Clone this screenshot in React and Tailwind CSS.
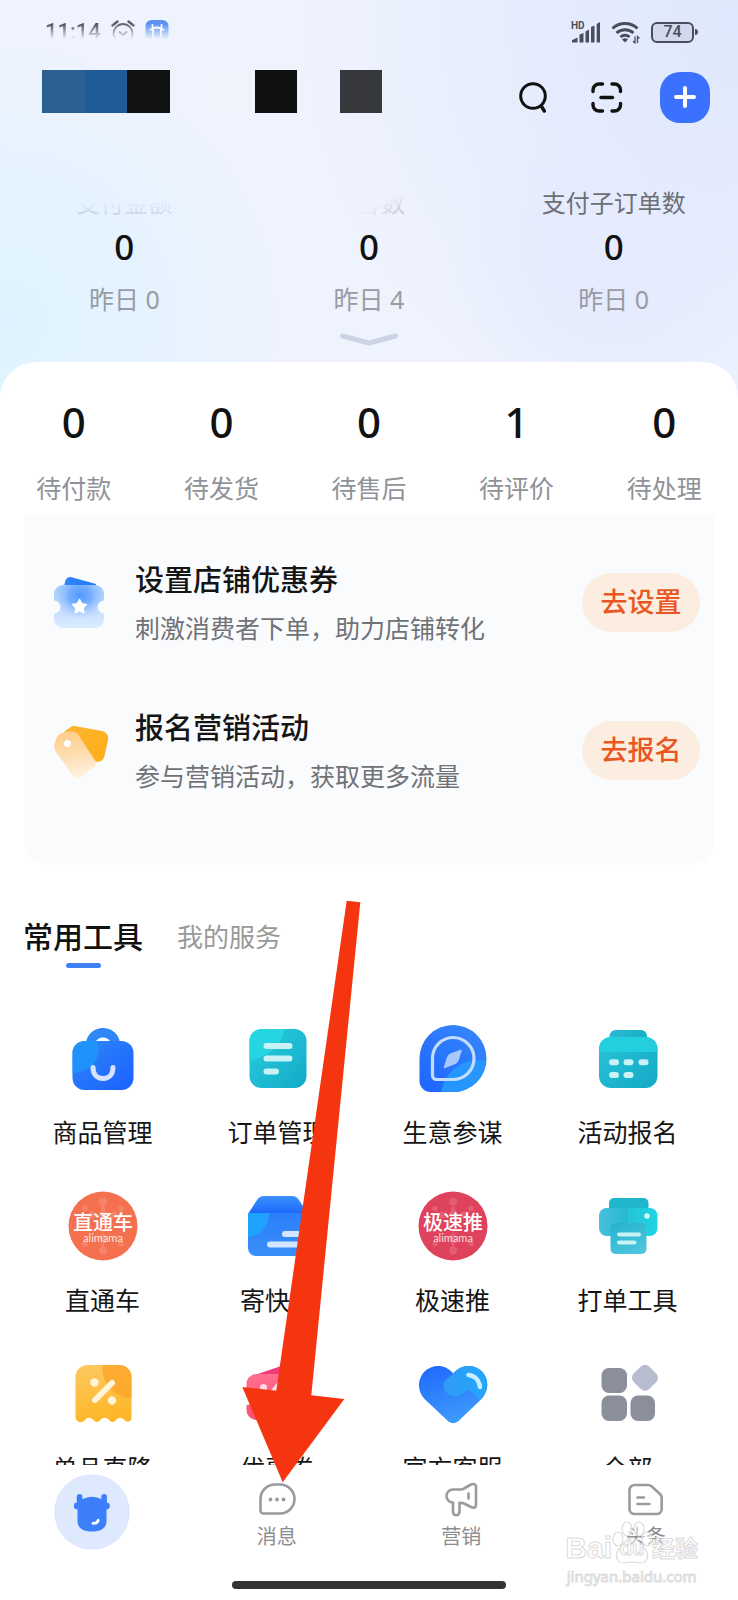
import React from "react";

const FONT = "font-['Noto_Sans','Noto_Sans_CJK_SC',sans-serif]";

/* ---------- status bar ---------- */

function AlarmIcon() {
  return (
    <svg viewBox="0 0 24 24" className="h-6 w-6" fill="none" stroke="#4a4f5c" strokeLinecap="round">
      <circle cx="12" cy="13.500" r="9.500" strokeWidth="1.800" />
      <path d="M1.500 5.500 6.500 1.500M22.500 5.500l-5-4" strokeWidth="2.400" />
      <path d="m8.500 12 3.500 3 3.500-3" strokeWidth="1.800" />
    </svg>
  );
}

function AppBadge() {
  return (
    <svg viewBox="0 0 24 24" className="h-6 w-6">
      <rect x="0.500" y="0" width="23" height="24" rx="6" fill="#4b86ee" />
      <path
        d="M7.500 5V7.500M16.500 5V7.500M8 8.500q4-2 8 0v7.500a3 3 0 0 1-3 3h-2a3 3 0 0 1-3-3zM5.500 9.500H8M16 9.500h2.500"
        fill="none"
        stroke="#fff"
        strokeWidth="1.800"
        strokeLinecap="round"
      />
    </svg>
  );
}

function SignalIcon() {
  return (
    <svg viewBox="0 0 30 22" className="h-[22px] w-[30px]" fill="#4a4e5c">
      <text x="0" y="8" fontSize="10" fontWeight="700" fontFamily="Roboto, sans-serif">HD</text>
      <path d="M1 21.500v-2.200l5.500-2.800v5zM8.500 21.500v-8l4-1.500v9.500zM14.500 21.500v-11l3.500-2v13zM20 21.500V6l3.500-1.500v17zM25.700 21.500V3L29 1v20.500z" />
    </svg>
  );
}

function WifiIcon() {
  return (
    <svg viewBox="0 0 30 24" className="h-6 w-[30px]" fill="none" stroke="#4a4e5c" strokeWidth="3">
      <path d="M1.500 8.500a18 18 0 0 1 25 0" />
      <path d="M5.500 13a12.500 12.500 0 0 1 17 0" />
      <path d="M9.500 17a6.500 6.500 0 0 1 9 0" />
      <path d="m11 19.500 3 3 3-3a4.500 4.500 0 0 0-6 0z" fill="#4a4e5c" stroke="none" />
      <path d="M24 16.500V23l-2-2M26.500 23v-6.500l2 2" strokeWidth="1.300" />
    </svg>
  );
}

function StatusBar() {
  return (
    <div className="flex h-16 items-center justify-between pl-[45px] pr-10">
      <div className="flex items-center gap-2.5 [mask-image:linear-gradient(to_bottom,rgba(0,0,0,0.9)_15%,transparent_80%)]">
        <span className="font-['Roboto',sans-serif] text-[22px] font-medium leading-6 text-[#3a3e49]">11:14</span>
        <AlarmIcon />
        <AppBadge />
      </div>
      <div className="flex items-center gap-2.5">
        <SignalIcon />
        <WifiIcon />
        <div className="flex items-center">
          <div className="flex h-[21px] w-[43px] items-center justify-center rounded-md border-2 border-[#4a4e5c] bg-[#d3d9ec] font-['Roboto',sans-serif] text-[16px] font-medium leading-none text-[#4a4e5c]">
            74
          </div>
          <div className="ml-px h-1.5 w-[3px] rounded-r-sm bg-[#4a4e5c]" />
        </div>
      </div>
    </div>
  );
}

/* ---------- header ---------- */

function TopBar() {
  return (
    <div className="flex h-[66px] items-center justify-between pl-[42px] pr-7">
      <div className="flex self-start pt-1.5">
        <div className="h-[43px] w-[43px] bg-[#2c6093]" />
        <div className="h-[43px] w-[42px] bg-[#1f5c97]" />
        <div className="h-[43px] w-[43px] bg-[#111212]" />
        <div className="ml-[42px] h-[43px] w-[43px] bg-[#f0f3fa]" />
        <div className="h-[43px] w-[42px] bg-[#0f1113]" />
        <div className="ml-[43px] h-[43px] w-[42px] bg-[#37383c]" />
      </div>
      <div className="flex items-center">
        <button type="button" aria-label="搜索" className="mr-[43px]">
          <svg viewBox="0 0 30 32" className="h-8 w-[30px]" fill="none" stroke="#111" strokeWidth="3" strokeLinecap="round">
            <circle cx="15" cy="15" r="12.300" />
            <path d="m23.500 25.500 2.800 4.500" strokeWidth="3.400" />
          </svg>
        </button>
        <button type="button" aria-label="扫一扫" className="mr-[37px]">
          <svg viewBox="0 0 32 32" className="h-8 w-8" fill="none" stroke="#111" strokeWidth="3.400" strokeLinecap="round">
            <path d="M2 10.500V9a6 6 0 0 1 6-6H11.500M21 3h2.500a6 6 0 0 1 6 6V10.500M29.500 22.500V24a6 6 0 0 1-6 6H21M11.500 30H8a6 6 0 0 1-6-6V22.500" />
            <path d="M10 16.500h11.500" />
          </svg>
        </button>
        <button type="button" aria-label="添加" className="flex h-[51px] w-[50px] items-center justify-center rounded-[20px] bg-[#3c70fe]">
          <svg viewBox="0 0 24 24" className="h-6 w-6" fill="none" stroke="#fff" strokeWidth="4" strokeLinecap="round">
            <path d="M12 3v18M3 12h18" />
          </svg>
        </button>
      </div>
    </div>
  );
}

function Stat({ label, value, past, labelClass }) {
  return (
    <div className="flex flex-col items-center">
      <div className={`text-[24px] leading-8 text-[#6c6f76] ${labelClass}`}>{label}</div>
      <div className="mt-1 text-[35px] font-medium leading-[48px] text-[#111]">{value}</div>
      <div className="mt-3 text-[25px] leading-8 text-[#999ca3]">昨日 {past}</div>
    </div>
  );
}

function Header() {
  return (
    <header className="bg-[#eff3fe] bg-[radial-gradient(circle_at_0%_80%,#def3ff_0,#e4f3ff_16%,transparent_36%),radial-gradient(circle_at_82%_68%,#e5eafd_0,transparent_24%),radial-gradient(circle_at_100%_5%,#dfe8fc_0,#e4ebfd_20%,transparent_52%)] pb-14">
      <StatusBar />
      <TopBar />
      <div className="mt-[57px] grid grid-cols-3 px-0.5">
        <Stat
          label="支付金额"
          value="0"
          past="0"
          labelClass="[mask-image:linear-gradient(to_bottom,transparent_45%,rgba(0,0,0,0.22)_85%)]"
        />
        <Stat
          label="访客数"
          value="0"
          past="4"
          labelClass="[mask-image:linear-gradient(155deg,transparent_58%,rgba(0,0,0,0.35)_90%)]"
        />
        <Stat label="支付子订单数" value="0" past="0" labelClass="" />
      </div>
      <div className="mt-[18px] flex justify-center">
        <svg viewBox="0 0 60 13" className="h-[13px] w-[60px]" fill="none" stroke="#cad4e4" strokeWidth="5" strokeLinecap="round" strokeLinejoin="round">
          <path d="M3.500 3 30 10l26.500-7" />
        </svg>
      </div>
    </header>
  );
}

/* ---------- orders + tasks ---------- */

const ORDERS = [
  ["0", "待付款"],
  ["0", "待发货"],
  ["0", "待售后"],
  ["1", "待评价"],
  ["0", "待处理"],
];

function CouponArt() {
  const body =
    "M13 13h32a9 9 0 0 1 9 9v6.500a6.500 6.500 0 0 0 0 13V47a9 9 0 0 1-9 9H13a9 9 0 0 1-9-9v-5.500a6.500 6.500 0 0 0 0-13V22a9 9 0 0 1 9-9z";
  return (
    <svg viewBox="0 0 60 60" className="h-[60px] w-[60px] shrink-0">
      <defs>
        <linearGradient id="cpBack" x1="0" y1="0" x2="1" y2="0">
          <stop offset="0" stopColor="#2f86fb" />
          <stop offset="1" stopColor="#2376f5" />
        </linearGradient>
        <linearGradient id="cpBody" x1="0" y1="0" x2="0" y2="1">
          <stop offset="0" stopColor="#a5cbff" />
          <stop offset="1" stopColor="#dcebff" />
        </linearGradient>
        <radialGradient id="cpGlow" cx="0.520" cy="0.250" r="0.550">
          <stop offset="0" stopColor="#4f98fd" />
          <stop offset="0.400" stopColor="#63a4fe" stopOpacity="0.800" />
          <stop offset="1" stopColor="#a5cbff" stopOpacity="0" />
        </radialGradient>
      </defs>
      <path d="M13.500 16 15.500 8.500Q17.500 4.500 21.500 5.200L46 12v4z" fill="url(#cpBack)" />
      <path d={body} fill="url(#cpBody)" />
      <path d={body} fill="url(#cpGlow)" />
      <path d="m29.500 27.500 2.200 4.300 4.800.7-3.500 3.400.8 4.800-4.300-2.200-4.300 2.200.8-4.800-3.500-3.400 4.800-.7z" fill="#fff" stroke="#fff" strokeWidth="1.600" strokeLinejoin="round" />
    </svg>
  );
}

function TagArt() {
  return (
    <svg viewBox="0 0 60 60" className="h-[60px] w-[60px] shrink-0">
      <defs>
        <linearGradient id="tgBack" x1="0" y1="0" x2="1" y2="1">
          <stop offset="0" stopColor="#fcb42e" />
          <stop offset="1" stopColor="#ffae1b" />
        </linearGradient>
        <linearGradient id="tgFront" x1="0.500" y1="0" x2="0.600" y2="1">
          <stop offset="0" stopColor="#fdcf8c" />
          <stop offset="0.450" stopColor="#fedcae" />
          <stop offset="1" stopColor="#fff3e4" />
        </linearGradient>
      </defs>
      <path d="M14 12 20 7.500Q23 5.500 26 6.200L52 11q7 2 6 9l-3.500 16q-2 7-9 5.500L40 39z" fill="url(#tgBack)" />
      <path d="M13 12.500 21 11.300q5-.300 7.500 3.700L45 40.500q2.500 5-2 7.500L31 57.500q-5 3-8.500-2L6 32q-2.500-4-1.500-8l2-6q2-4.500 6.500-5.500z" fill="url(#tgFront)" />
      <circle cx="17.500" cy="23.500" r="3.500" fill="#fff" />
    </svg>
  );
}

function Task({ art, title, desc, action }) {
  return (
    <div className="flex h-[148px] items-center pl-[26px] pr-3.5">
      {art}
      <div className="ml-[25px] flex-1 whitespace-nowrap">
        <h3 className="text-[29px] font-medium leading-[44px] text-[#151515]">{title}</h3>
        <p className="mt-2 text-[25px] leading-9 text-[#707276]">{desc}</p>
      </div>
      <button type="button" className="h-[59px] w-[118px] rounded-full bg-[#fbeee0] pb-0.5 text-[27px] font-medium leading-none text-[#ea5722]">
        {action}
      </button>
    </div>
  );
}

/* ---------- tools ---------- */

function Art({ children }) {
  return (
    <svg viewBox="0 0 72 72" className="h-[72px] w-[72px]" fill="none">
      {children}
    </svg>
  );
}

function BagArt() {
  return (
    <Art>
      <defs>
        <linearGradient id="bagG" x1="0" y1="0" x2="1" y2="1">
          <stop offset="0" stopColor="#3088f8" />
          <stop offset="1" stopColor="#1a60ff" />
        </linearGradient>
        <clipPath id="bagC"><rect x="5.500" y="19" width="61" height="49" rx="12" /></clipPath>
      </defs>
      <path d="M19 20C21 11 28 6 36 6s15 5 17 14H43.500c-1.500-3-4-4.500-7.500-4.500s-6 1.500-7.500 4.500z" fill="#2f86f7" />
      <rect x="5.500" y="19" width="61" height="49" rx="12" fill="url(#bagG)" />
      <path d="M0 15h27c4 3 4.500 9 4.500 14C31 42 20 51 0 52z" fill="#1f97fc" fillOpacity="0.850" clipPath="url(#bagC)" />
      <path d="M26 45.500c0 7 4 11 10 11s10-4 10-11" stroke="#d4e3ff" strokeWidth="5" strokeLinecap="round" />
    </Art>
  );
}

function OrderArt() {
  return (
    <Art>
      <defs>
        <linearGradient id="ordG" x1="0" y1="0" x2="1" y2="1">
          <stop offset="0" stopColor="#27cfdc" />
          <stop offset="1" stopColor="#14a9c9" />
        </linearGradient>
        <clipPath id="ordC"><rect x="7.500" y="7" width="57" height="59" rx="12" /></clipPath>
      </defs>
      <rect x="7.500" y="7" width="57" height="59" rx="12" fill="url(#ordG)" />
      <path d="M0 0h43c0 22-16 38-43 39z" fill="#26d5e2" clipPath="url(#ordC)" />
      <path d="M24.500 24h23M24.500 36.500h23M24.500 49.500h9.500" stroke="#c9f2f7" strokeWidth="6" strokeLinecap="round" />
    </Art>
  );
}

function CompassArt() {
  return (
    <Art>
      <defs>
        <linearGradient id="cmpG" x1="1" y1="0" x2="0.200" y2="1">
          <stop offset="0" stopColor="#3889fb" />
          <stop offset="1" stopColor="#2067ff" />
        </linearGradient>
        <clipPath id="cmpC"><path d="M36 3a33.500 33.500 0 1 1 0 67H13.500a11 11 0 0 1-11-11V36.500A33.500 33.500 0 0 1 36 3z" /></clipPath>
      </defs>
      <path d="M36 3a33.500 33.500 0 1 1 0 67H13.500a11 11 0 0 1-11-11V36.500A33.500 33.500 0 0 1 36 3z" fill="url(#cmpG)" />
      <circle cx="61" cy="75" r="37" fill="#2496fd" clipPath="url(#cmpC)" />
      <path d="M36 15.500a21 21 0 1 1 0 42H19.500a4 4 0 0 1-4-4V36.500A20.500 21 0 0 1 36 15.500z" stroke="#c3dcff" strokeWidth="3.200" />
      <path d="M44 28.500 41 38Q40 40.500 37.500 41.500L27.500 45.500 30.500 36Q31.500 33 34 32z" fill="#a9c9fd" stroke="#a9c9fd" strokeWidth="1.500" strokeLinejoin="round" />
    </Art>
  );
}

function CalendarArt() {
  return (
    <Art>
      <defs>
        <linearGradient id="calT" x1="0" y1="0" x2="1" y2="0">
          <stop offset="0" stopColor="#29b9d0" />
          <stop offset="1" stopColor="#16b1c6" />
        </linearGradient>
        <linearGradient id="calG" x1="0" y1="0" x2="1" y2="1">
          <stop offset="0" stopColor="#2bc3d8" />
          <stop offset="1" stopColor="#13a9c7" />
        </linearGradient>
        <clipPath id="calC"><rect x="7" y="15" width="58.500" height="51" rx="12" /></clipPath>
      </defs>
      <path d="M17.500 20v-6a6 6 0 0 1 6-6H49a6 6 0 0 1 6 6v6z" fill="url(#calT)" />
      <rect x="7" y="15" width="58.500" height="51" rx="12" fill="url(#calG)" />
      <rect x="0" y="10" width="72" height="20" fill="#23cfdf" clipPath="url(#calC)" />
      <path d="M20 40.200h4M34.500 40.200h4M49.500 40.200h4M20 53h4M34.500 53h4" stroke="#c9f2f7" strokeWidth="6" strokeLinecap="round" />
    </Art>
  );
}

function AlimamaArt({ name, color }) {
  return (
    <Art>
      <circle cx="36" cy="36" r="34.500" fill={color} />
      <g fill="#fff" fillOpacity="0.150">
        <circle cx="36" cy="11.500" r="4" />
        <circle cx="36" cy="60.500" r="4" />
        <circle cx="18" cy="18.500" r="2.800" />
        <circle cx="54" cy="18.500" r="2.800" />
        <circle cx="18" cy="54" r="2.800" />
        <circle cx="54" cy="54" r="2.800" />
        <circle cx="25" cy="25" r="3.500" />
        <circle cx="47" cy="25" r="3.500" />
        <path d="m36 14 4 10-4 6-4-6zM36 58l4-10-4-6-4 6z" />
      </g>
      <text x="36" y="40" textAnchor="middle" fontSize="20" fontWeight="500" fill="#fff" fontFamily="'Noto Sans CJK SC', sans-serif">{name}</text>
      <text x="36" y="51.500" textAnchor="middle" fontSize="11" fill="#fff" fillOpacity="0.850" fontFamily="Lato, sans-serif">alimama</text>
    </Art>
  );
}

function BoxArt() {
  return (
    <Art>
      <defs>
        <linearGradient id="boxT" x1="0" y1="0" x2="0" y2="1">
          <stop offset="0" stopColor="#3c92fb" />
          <stop offset="1" stopColor="#1b66fe" />
        </linearGradient>
        <linearGradient id="boxG" x1="0" y1="0" x2="0" y2="1">
          <stop offset="0" stopColor="#2c7ffb" />
          <stop offset="1" stopColor="#3a8ef8" />
        </linearGradient>
        <clipPath id="boxC"><path d="M6 23h60v35a8 8 0 0 1-8 8H14a8 8 0 0 1-8-8z" /></clipPath>
      </defs>
      <path d="M6 24 15 10q2.500-4 7-4h28q4.500 0 7 4l9 14z" fill="url(#boxT)" />
      <path d="M6 23h60v35a8 8 0 0 1-8 8H14a8 8 0 0 1-8-8z" fill="url(#boxG)" />
      <circle cx="5" cy="25" r="22" fill="#1fa1ff" clipPath="url(#boxC)" />
      <path d="M43 44h14M28 54.500h29" stroke="#d3e5ff" strokeWidth="6" strokeLinecap="round" />
    </Art>
  );
}

function PrinterArt() {
  return (
    <Art>
      <defs>
        <linearGradient id="prG" x1="0" y1="0" x2="1" y2="0">
          <stop offset="0" stopColor="#45c1dd" />
          <stop offset="0.500" stopColor="#27b7d0" />
          <stop offset="0.500" stopColor="#25c4d8" />
          <stop offset="1" stopColor="#1fd4e3" />
        </linearGradient>
        <linearGradient id="prP" x1="0" y1="0" x2="0.500" y2="1">
          <stop offset="0" stopColor="#23b2cd" />
          <stop offset="1" stopColor="#4bc4dd" />
        </linearGradient>
      </defs>
      <path d="M17 22v-9a5 5 0 0 1 5-5h29.500a5 5 0 0 1 5 5v9z" fill="#20b6cd" />
      <rect x="7" y="18" width="58.500" height="28" rx="7.500" fill="url(#prG)" />
      <rect x="18.500" y="33" width="36" height="31" rx="5" fill="url(#prP)" />
      <path d="M27 44.500h20M27 52.500h15.500" stroke="#c9f2f7" strokeWidth="4" strokeLinecap="round" />
      <circle cx="55" cy="26" r="2.800" fill="#d6f8fa" />
    </Art>
  );
}

function DiscountArt() {
  const d = "M20.500 7h32a12 12 0 0 1 12 12v42c-1 3-5 3.500-7 1-3-3-6-3-8.500 0-2 2.500-5 2.500-7 0-3-3-6-3-8.500 0-2 2.500-5 2.500-7 0-3-3-6-3-8.500 0-3 3.500-9 3-9.500-3V19a12 12 0 0 1 12-12z";
  return (
    <Art>
      <defs>
        <linearGradient id="dsG" x1="0.200" y1="0" x2="0.400" y2="1">
          <stop offset="0" stopColor="#fec85f" />
          <stop offset="1" stopColor="#fdb628" />
        </linearGradient>
        <clipPath id="dsC"><path d={d} /></clipPath>
      </defs>
      <path d={d} fill="url(#dsG)" />
      <circle cx="64.500" cy="11" r="29" fill="#fda62c" fillOpacity="0.850" clipPath="url(#dsC)" />
      <circle cx="27.500" cy="24.500" r="4.200" fill="#fff3d8" />
      <circle cx="45" cy="42.500" r="4.200" fill="#fff3d8" />
      <path d="M45 25 28 42" stroke="#fff3d8" strokeWidth="6" strokeLinecap="round" />
    </Art>
  );
}

function CouponToolArt() {
  return (
    <Art>
      <defs>
        <linearGradient id="ctG" x1="0" y1="0" x2="0" y2="1">
          <stop offset="0" stopColor="#ff6f90" />
          <stop offset="1" stopColor="#ff4f72" />
        </linearGradient>
      </defs>
      <path d="M10 18 48 5q6-1.500 8 3.500L59 18z" fill="#f23c78" />
      <path d="M15 16h42a10 10 0 0 1 10 10v6a7 7 0 0 0 0 14v6a10 10 0 0 1-10 10H14.500a10 10 0 0 1-10-10v-5a7 7 0 0 0 0-15v-6a10 10 0 0 1 10.500-10z" fill="url(#ctG)" />
      <path d="M36 27.500 22 45" stroke="#ffdbe4" strokeWidth="5" strokeLinecap="round" />
      <circle cx="21.500" cy="29.500" r="3.500" fill="#ffdbe4" />
    </Art>
  );
}

function HeartArt() {
  return (
    <Art>
      <defs>
        <linearGradient id="htG" x1="0.200" y1="0" x2="0.600" y2="1">
          <stop offset="0" stopColor="#226afd" />
          <stop offset="1" stopColor="#3e9dfb" />
        </linearGradient>
        <linearGradient id="htB" x1="0" y1="0.500" x2="1" y2="0.500">
          <stop offset="0" stopColor="#309bf6" />
          <stop offset="1" stopColor="#23a7fc" />
        </linearGradient>
      </defs>
      <path d="M36.300 15.500C44 5.500 58 6 65 13.500c7.500 8 7 20-1 28L41 63.500q-4.500 3.500-9.500 0L8 41.500c-8-8-8-20-.5-28C15 6 28.500 5.500 36.300 15.500z" fill="url(#htG)" />
      <path d="M36.300 15.500C44 5.500 58 6 65 13.500c7.500 8 7 19.500-2 27.500L54.500 33.500q-3-2.500-6 0C44 38.500 37.500 39.500 32 36.500c-6.500-4-7.500-11-2.500-15z" fill="url(#htB)" />
      <path d="M51.500 17c6 .5 10.500 5 11.500 12" stroke="#c8eeff" strokeWidth="4.500" strokeLinecap="round" />
    </Art>
  );
}

function AllArt() {
  return (
    <Art>
      <rect x="9.500" y="10" width="25.500" height="25" rx="7.500" fill="#8a8f9b" />
      <rect x="9.500" y="37.500" width="25.500" height="25.500" rx="7.500" fill="#8a8f9b" />
      <rect x="38.500" y="37.500" width="24.500" height="25.500" rx="7.500" fill="#8a8f9b" />
      <rect x="42" y="8.800" width="22" height="22" rx="6" transform="rotate(45 53 19.800)" fill="#b7bdce" />
    </Art>
  );
}

const TOOLS = [
  { label: "商品管理", art: <BagArt /> },
  { label: "订单管理", art: <OrderArt /> },
  { label: "生意参谋", art: <CompassArt /> },
  { label: "活动报名", art: <CalendarArt /> },
  { label: "直通车", art: <AlimamaArt name="直通车" color="#f4704f" /> },
  { label: "寄快递", art: <BoxArt /> },
  { label: "极速推", art: <AlimamaArt name="极速推" color="#de425c" /> },
  { label: "打单工具", art: <PrinterArt /> },
  { label: "单品直降", art: <DiscountArt /> },
  { label: "优惠券", art: <CouponToolArt /> },
  { label: "官方客服", art: <HeartArt /> },
  { label: "全部", art: <AllArt /> },
];

/* ---------- bottom navigation ---------- */

function NavItem({ label, children }) {
  return (
    <a href="#" className="flex flex-col items-center pt-[17px]">
      <svg viewBox="0 0 36 36" className="h-9 w-9 overflow-visible" fill="none" stroke="#999b9e" strokeWidth="2.600" strokeLinecap="round" strokeLinejoin="round">
        {children}
      </svg>
      <span className="mt-[5px] text-[20px] leading-7 text-[#8b8d90]">{label}</span>
    </a>
  );
}

function BottomNav() {
  return (
    <nav className="shrink-0 bg-white pb-[11px]">
      <div className="grid grid-cols-4">
        <a href="#" aria-label="首页" className="flex justify-center pt-[9px]">
          <svg viewBox="0 0 76 76" className="h-[76px] w-[76px]">
            <circle cx="38" cy="38" r="37.800" fill="#dfe9fd" />
            <g fill="#3d7efb">
              <path d="M30 24.500q8-3.500 16 0c5 1.500 6.500 5 6.500 9V47C52.500 54 47 57.500 38 57.500S23.500 54 23.500 47V33.500c0-4 1.500-7.500 6.500-9z" />
              <rect x="22.800" y="20" width="5.600" height="13" rx="2.800" />
              <rect x="47.300" y="20" width="5.600" height="13" rx="2.800" />
              <rect x="19.800" y="28.500" width="36" height="6.800" rx="3.400" />
            </g>
            <path d="M39 49.300c3 .2 4.700-1 5.200-3" fill="none" stroke="#fff" strokeWidth="2.800" strokeLinecap="round" />
          </svg>
        </a>
        <NavItem label="消息">
          <path d="M16 2.500h5a14.500 14.500 0 0 1 0 29H4.500a3 3 0 0 1-3-3V17a14.500 14.500 0 0 1 14.500-14.500z" />
          <g fill="#999b9e" stroke="none">
            <circle cx="11.500" cy="17.500" r="1.900" />
            <circle cx="18" cy="17.500" r="1.900" />
            <circle cx="24.500" cy="17.500" r="1.900" />
          </g>
        </NavItem>
        <NavItem label="营销">
          <path d="M10 7.500h8q1.500 0 3-1l7-4Q32.500.8 33 4.500v18.500q-.500 4-5 2l-7-3.500q-1.500-.800-3.500-.800H16.500v9.300a3.200 3.200 0 0 1-6.500 0V20.500a6.500 6.500 0 0 1 0-13z" />
          <path d="M25.500 11.500v5" />
        </NavItem>
        <NavItem label="头条">
          <path d="M6.500 3H20q2 0 3.500 1.300L32 12q1.700 1.500 1.700 3.700V27a5 5 0 0 1-5 5H6.500a5 5 0 0 1-5-5V8a5 5 0 0 1 5-5z" />
          <path d="M9.500 15.500h6.500M9.500 22h12" />
        </NavItem>
      </div>
      <div className="mx-auto mt-[30px] h-2 w-[37%] rounded-full bg-[#333]" />
    </nav>
  );
}

/* ---------- overlays ---------- */

function Pointer() {
  return (
    <svg viewBox="0 0 120 583" className="pointer-events-none absolute left-[242px] top-[900px] h-[583px] w-[120px]">
      <path d="M104.700.8 118.300 2.300 69.300 495.300 102.300 499 40.700 582.300.3 487l34 3.700z" fill="#f5350f" />
    </svg>
  );
}

function Watermark() {
  return (
    <div className="pointer-events-none absolute bottom-[14px] right-10 flex flex-col items-center text-white/70">
      <div className="flex items-end font-bold leading-9 [-webkit-text-stroke:1px_#dcdcdc]">
        <span className="font-['Liberation_Sans',sans-serif] text-[30px]">Bai</span>
        <span className="relative flex h-[46px] w-10 items-end justify-center">
          <svg viewBox="0 0 40 46" className="absolute bottom-0 left-0 h-[46px] w-10" fill="#fff" fillOpacity="0.500" stroke="#dcdcdc" strokeWidth="1.200">
            <ellipse cx="6" cy="19" rx="5" ry="7" />
            <ellipse cx="15" cy="9" rx="5" ry="7" />
            <ellipse cx="27" cy="9" rx="5" ry="7" />
            <ellipse cx="35" cy="19" rx="5" ry="7" />
            <path d="M20 18c6 0 8 6 12 10 6 6 4 15-3 15-4 0-6-1-9-1s-5 1-9 1c-7 0-9-9-3-15 4-4 6-10 12-10z" />
          </svg>
          <span className="relative font-['Liberation_Sans',sans-serif] text-[20px]">du</span>
        </span>
        <span className="text-[23px]">经验</span>
      </div>
      <div className="text-[15px] leading-5 [-webkit-text-stroke:1px_#dcdcdc]">jingyan.baidu.com</div>
    </div>
  );
}

export default function App() {
  return (
    <div className={`relative flex h-screen flex-col overflow-hidden bg-white ${FONT}`}>
      <main className="min-h-0 flex-1 overflow-y-auto [scrollbar-width:none]">
        <Header />
        <section className="relative -mt-10 rounded-t-[36px] bg-white pt-8">
          <div className="grid grid-cols-5">
            {ORDERS.map(([value, label]) => (
              <div key={label} className="flex flex-col items-center">
                <div className="text-[42px] font-medium leading-[56px] text-[#111]">{value}</div>
                <div className="mt-[22px] text-[25px] leading-8 text-[#8f9298]">{label}</div>
              </div>
            ))}
          </div>
          <div className="mx-6 mt-[11px] rounded-b-3xl bg-[#f9fbfd] pb-[41px] pt-[13px]">
            <Task art={<CouponArt />} title="设置店铺优惠券" desc="刺激消费者下单，助力店铺转化" action="去设置" />
            <Task art={<TagArt />} title="报名营销活动" desc="参与营销活动，获取更多流量" action="去报名" />
          </div>

          <div className="mt-[50px] flex items-start gap-[34px] px-[23px]">
            <button type="button" className="flex flex-col items-center text-[30px] font-medium leading-[44px] text-[#111]">
              常用工具
              <span className="mt-1 h-[5px] w-[35px] rounded-full bg-[#4080f5]" />
            </button>
            <button type="button" className="text-[26px] leading-[44px] text-[#999]">我的服务</button>
          </div>

          <div className="mt-[54px] grid grid-cols-4 gap-y-10 pb-10 pl-[15px] pr-[23px]">
            {TOOLS.map((tool) => (
              <a key={tool.label} href="#" className="flex flex-col items-center">
                {tool.art}
                <span className="mt-5 text-[25px] leading-9 text-[#151515]">{tool.label}</span>
              </a>
            ))}
          </div>
        </section>
      </main>
      <BottomNav />
      <Pointer />
      <Watermark />
    </div>
  );
}
